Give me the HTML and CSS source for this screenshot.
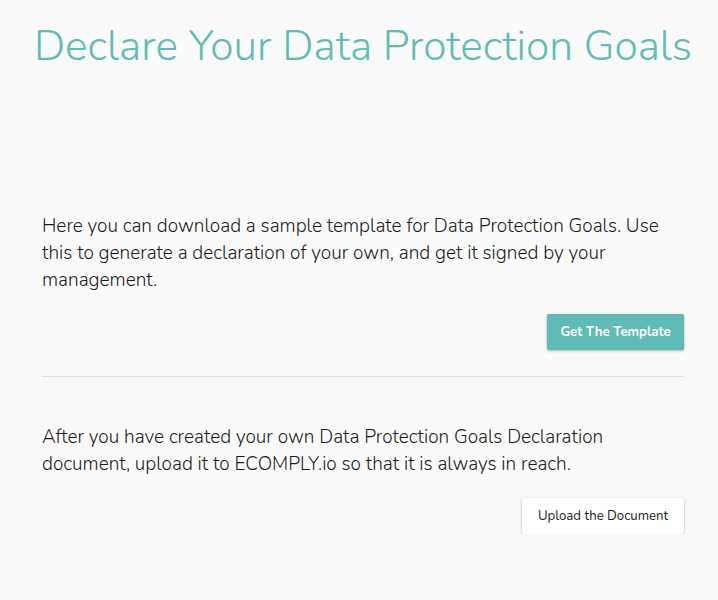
FILE: index.html
```html
<!DOCTYPE html>
<html>
<head>
<meta charset="utf-8">
<link rel="stylesheet" href="styles.css">
</head>
<body>
<main class="page">
  <h1 class="title">Declare Your Data Protection Goals</h1>
  <section class="block first">
    <p class="text">Here you can download a sample template for Data Protection Goals. Use this to generate a declaration of your own, and get it signed by your management.</p>
    <div class="actions"><button class="btn primary">Get The Template</button></div>
  </section>
  <hr class="divider">
  <section class="block second">
    <p class="text">After you have created your own Data Protection Goals Declaration document, upload it to ECOMPLY.io so that it is always in reach.</p>
    <div class="actions"><button class="btn plain">Upload the Document</button></div>
  </section>
</main>
</body>
</html>
```
FILE: styles.css
```css
html, body {
  margin: 0;
  padding: 0;
  background: #fafafa;
}
body {
  font-family: "Nunito", "Lato", "Open Sans", sans-serif;
  color: #222;
}
.page {
  width: 642px;
  margin-left: 42px;
  display: flex;
  flex-direction: column;
}
.title {
  margin: 20px -10px 0;
  text-align: center;
  font-weight: 300;
  font-size: 42.5px;
  line-height: 52px;
  color: #62bcb5;
  white-space: nowrap;
}
.block.first { margin-top: 141px; }
.block.second { margin-top: 47px; }
.text {
  margin: 0;
  font-size: 19px;
  line-height: 27px;
  font-weight: 300;
  color: #1a1a1a;
}
.actions {
  display: flex;
  justify-content: flex-end;
  margin-top: 20px;
}
.btn {
  font-family: inherit;
  font-size: 13.2px;
  height: 36px;
  border: none;
  border-radius: 2px;
  padding: 0;
  white-space: nowrap;
  text-align: center;
  box-shadow: 0 1px 3px rgba(0,0,0,0.3);
  cursor: pointer;
}
.btn.primary {
  background: #5fbbb4;
  color: #fff;
  font-weight: 700;
  width: 137px;
}
.btn.plain {
  background: #fff;
  color: #222;
  font-weight: 400;
  width: 162px;
}
.divider {
  border: none;
  border-top: 1px solid #e0e0e0;
  margin: 26px 0 0;
  width: 100%;
}
```
